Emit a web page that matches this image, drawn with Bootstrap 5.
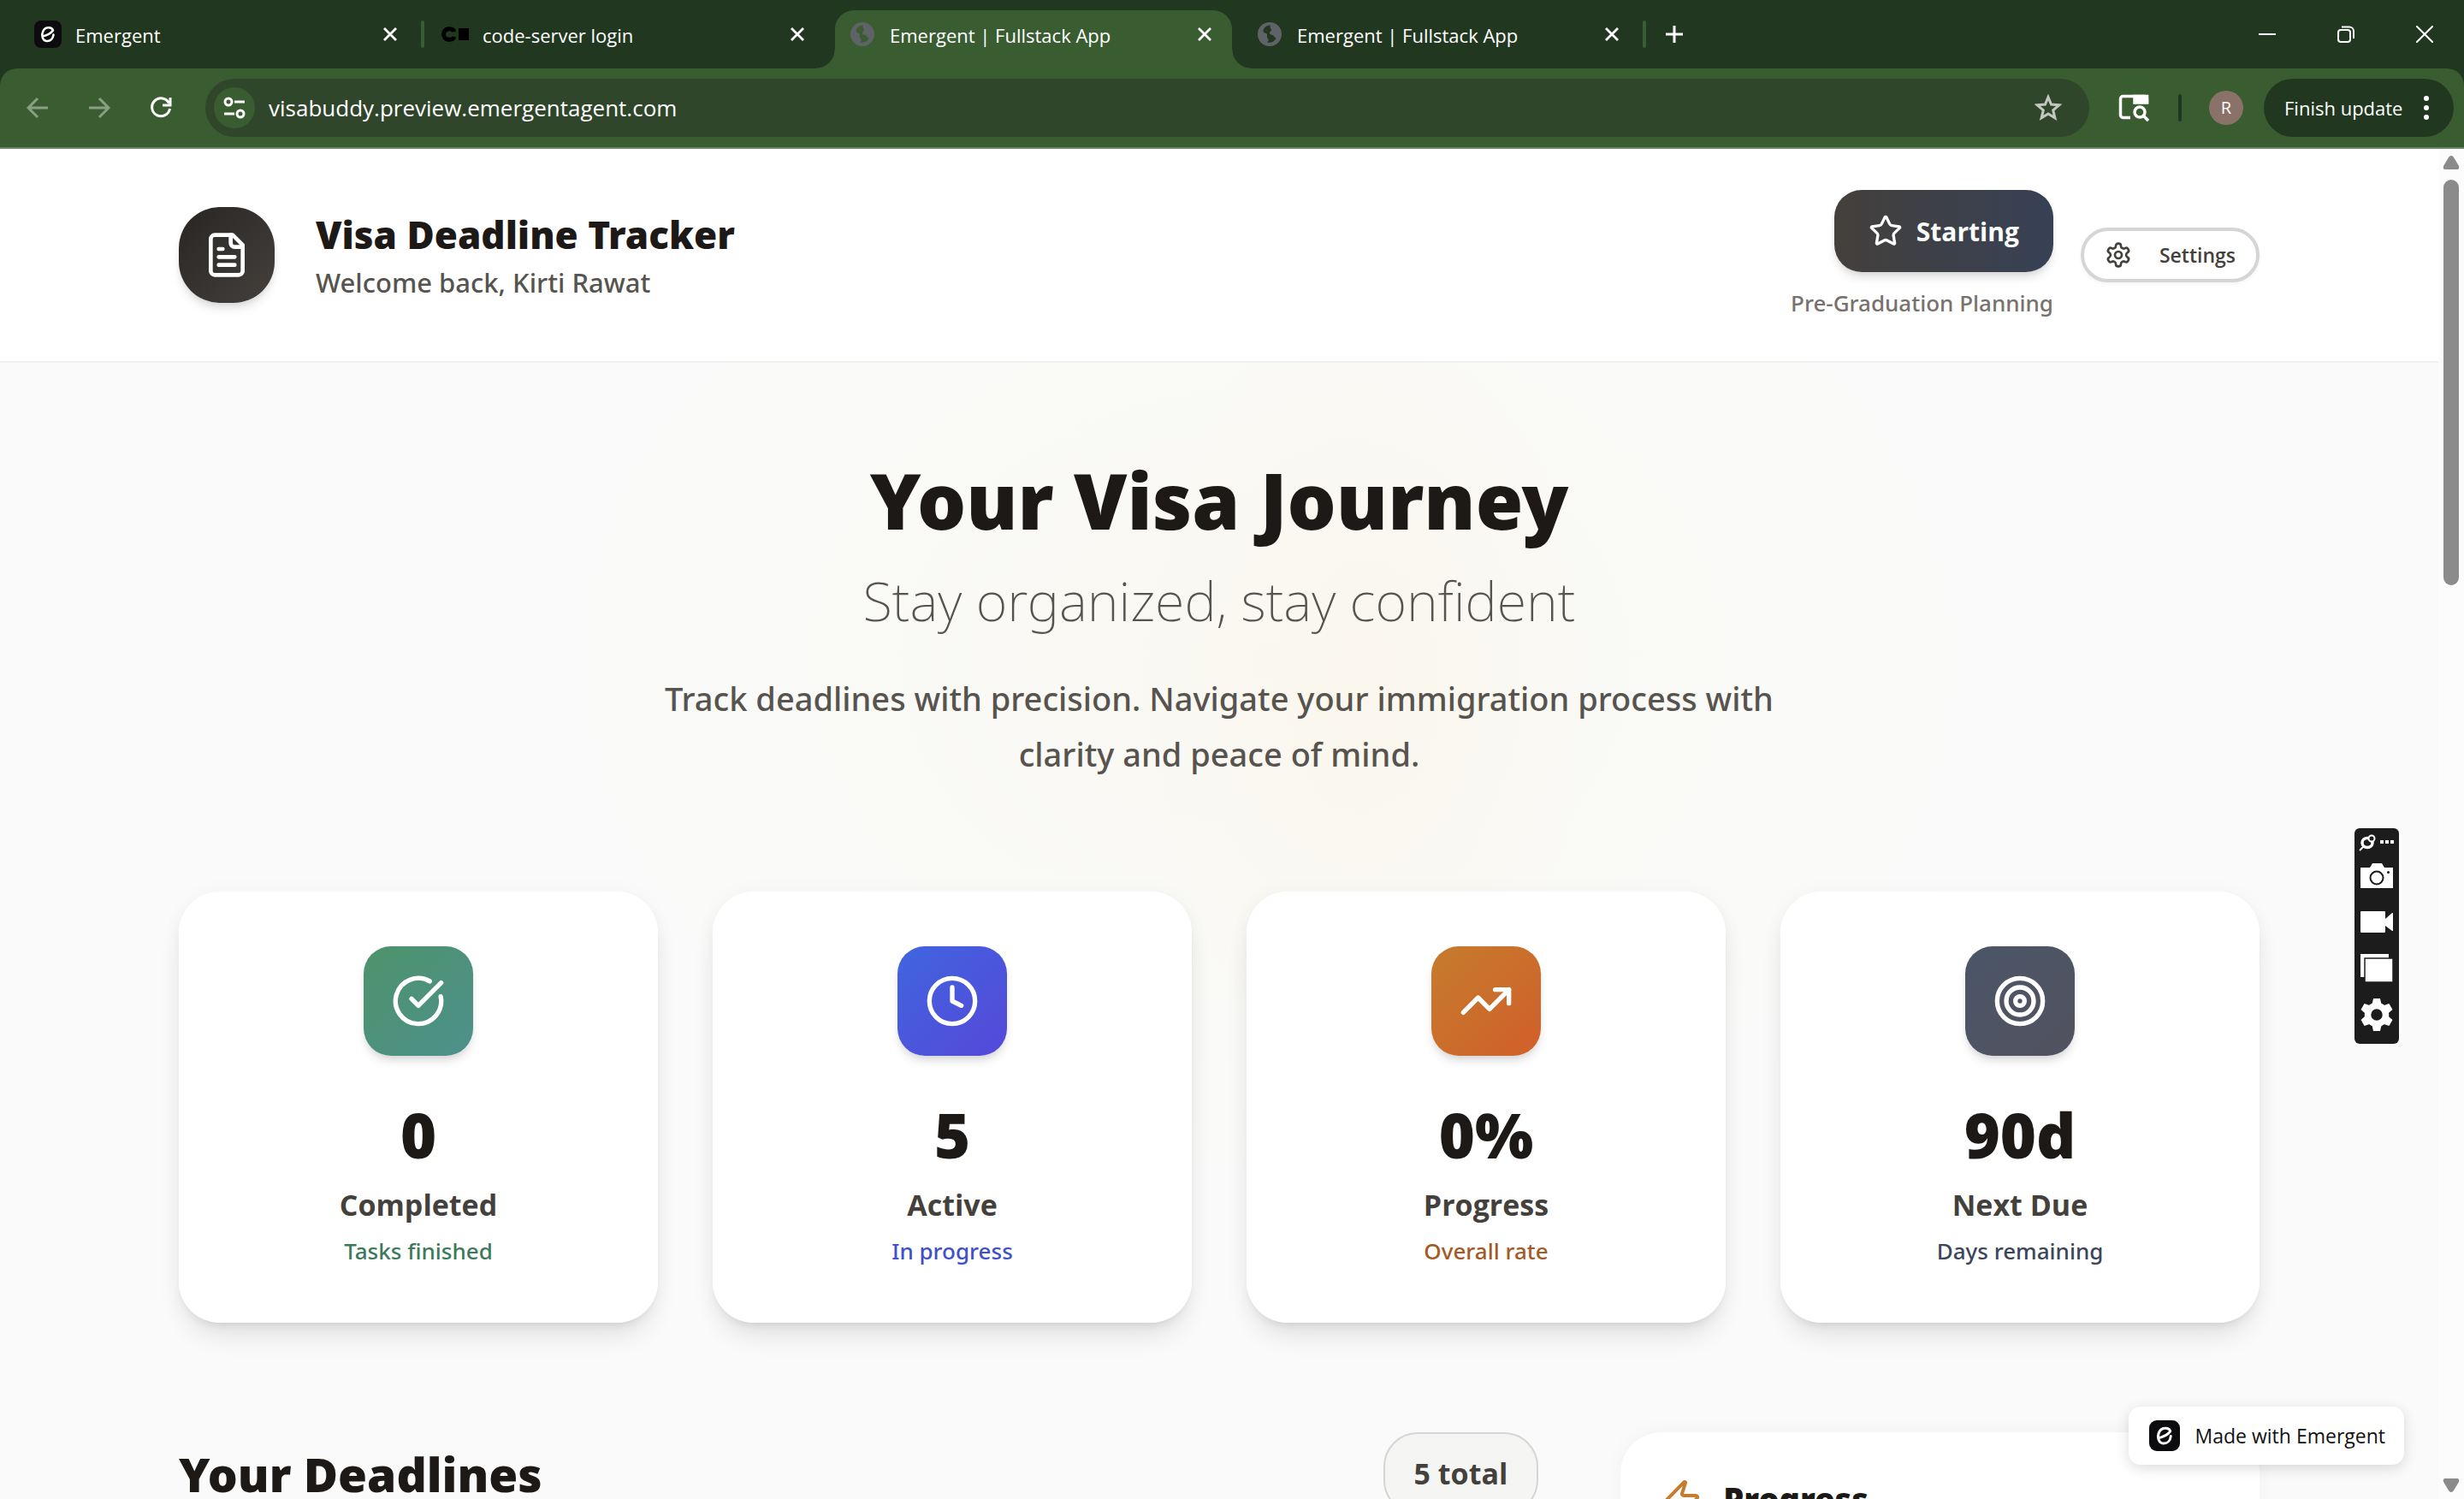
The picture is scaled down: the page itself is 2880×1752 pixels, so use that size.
<!DOCTYPE html>
<html lang="en">
<head>
<meta charset="utf-8">
<meta name="viewport" content="width=device-width, initial-scale=1">
<title>Emergent | Fullstack App</title>
<link href="https://cdn.jsdelivr.net/npm/bootstrap@5.3.0/dist/css/bootstrap.min.css" rel="stylesheet">
<style>
:root{--strip:#22371f;--bar:#3a5c31;--field:#30462b;--ink:#1c1917}
body{font-family:"Open Sans","Noto Sans",sans-serif;color:var(--ink);background:#fafafa}
button{font-family:inherit}
svg{display:block;flex:none}
.stroke-icon{fill:none;stroke:currentColor;stroke-width:2;stroke-linecap:round;stroke-linejoin:round}
.plain-btn{background:none;border:0;padding:0;color:inherit;display:flex;align-items:center;justify-content:center}
.heavy{font-family:"Noto Sans",sans-serif;font-weight:900}
.medium{font-family:"Noto Sans",sans-serif;font-weight:500}

/* browser frame */
.tab-strip{background:var(--strip);height:80px;padding:12px 0 0 24px;color:#fff;font-size:22px}
.browser-tab{width:464px;height:68px;padding:0 16px 12px;position:relative}
.browser-tab svg{width:32px;height:32px}
.browser-tab span{padding-top:2px}
.browser-tab .tab-close{width:32px}
.browser-tab.is-active{background:var(--bar);border-radius:22px 22px 0 0}
.browser-tab.is-active::before,.browser-tab.is-active::after{content:"";position:absolute;bottom:0;width:22px;height:22px}
.browser-tab.is-active::before{right:100%;background:radial-gradient(circle at 0 0,transparent 21px,var(--bar) 22px)}
.browser-tab.is-active::after{left:100%;background:radial-gradient(circle at 100% 0,transparent 21px,var(--bar) 22px)}
.tab-gap{width:12px;height:56px}
.tab-gap span{width:4px;height:32px;border-radius:2px;background:var(--bar)}
.new-tab{width:58px;height:56px}
.win-controls{height:56px}
.win-controls button{width:92px}
.toolbar-wrap{background:var(--strip)}
.tool-row{background:var(--bar);height:94px;border-bottom:2px solid #6b876a;border-radius:20px 20px 0 0;padding:12px 12px 12px 8px;color:#fff}
.nav-btn{width:72px;height:68px}
.nav-btn:disabled{color:#8aa083;opacity:1}
.address{background:var(--field);height:68px;border-radius:34px;padding:0 32px 0 10px;margin:0 34px 0 16px}
.site-info{width:48px;height:48px;border-radius:50%;background:var(--bar)}
.address input{background:none;border:0;outline:0;color:#fff;font-size:26px;padding:0;margin-left:16px;min-width:0}
.tool-sep{width:4px;height:32px;border-radius:2px;background:var(--strip);margin:0 32px 0 34px}
.avatar{width:40px;height:40px;border-radius:50%;background:#8a7268;font-size:20px}
.update-btn{background:var(--strip);border:0;border-radius:34px;height:68px;width:222px;color:#fff;font-size:22px;padding:0 28px 0 24px;margin-left:24px}

/* page */
.viewport-row{min-height:0}
.page-view{overflow:hidden;position:relative;background:
 radial-gradient(ellipse 260px 460px at 56% 40%,rgba(252,243,226,.35),transparent),
 radial-gradient(ellipse 860px 640px at 52% 38%,rgba(249,248,240,.8),transparent),#fafafa}
.scroll-rail{width:30px;background:#fcfcfc;padding:8px 0}
.scroll-rail .thumb{width:18px;height:474px;border-radius:9px;background:#8b8b8b;margin:12px 0 auto}
.wrap{width:100%;max-width:2432px;margin:0 auto}
.app-header{background:#fff;border-bottom:2px solid #f0f0ef;padding:48px 0}
.app-logo{width:112px;height:112px;border-radius:48px;background:linear-gradient(135deg,#292524,#44403c);color:#fff;box-shadow:0 8px 12px -2px rgba(0,0,0,.12),0 4px 8px -4px rgba(0,0,0,.1)}
.app-title{font-size:44px;line-height:64px;margin:0}
.app-sub{font-size:31px;line-height:48px;color:#57534e;margin:0}
.stage-btn{height:96px;border:0;border-radius:32px;padding:0 40px;gap:16px;color:#fff;font-size:30px;font-weight:700;background:linear-gradient(90deg,#44403c,#374155);box-shadow:0 8px 12px -2px rgba(0,0,0,.12),0 4px 8px -4px rgba(0,0,0,.1)}
.stage-note{font-size:26px;line-height:40px;color:#78716c;margin:16px 0 0}
.settings-btn{height:64px;border:4px solid #d6d5d4;border-radius:32px;background:#fff;padding:0 24px;gap:32px;font-size:23px;font-weight:600;color:#44403c;box-shadow:0 2px 4px rgba(0,0,0,.05)}
.hero{padding:100px 0 128px}
.hero h1{font-size:90px;line-height:120px;margin:0}
.hero-sub{font-family:"Noto Sans",sans-serif;font-weight:200;font-size:63px;line-height:116px;color:#57534e;margin:0}
.hero-text{font-size:38px;line-height:65px;color:#57534e;max-width:1344px;margin:24px auto 0}
.stat-grid{display:grid;grid-template-columns:repeat(4,1fr);gap:64px}
.stat-card{background:rgba(255,255,255,.94);border:0;border-radius:48px;padding:64px 32px 62px;box-shadow:0 20px 30px -6px rgba(0,0,0,.1),0 8px 12px -8px rgba(0,0,0,.12),0 0 24px rgba(0,0,0,.03)}
.stat-tile{width:128px;height:128px;border-radius:32px;color:#fff;margin:0 auto 48px;box-shadow:0 8px 12px -2px rgba(0,0,0,.12),0 4px 8px -4px rgba(0,0,0,.1)}
.tile-green{background:linear-gradient(135deg,#4d936b,#4d908b)}
.tile-blue{background:linear-gradient(135deg,#4065df,#5548d9)}
.tile-amber{background:linear-gradient(135deg,#c57c2d,#d15f2a)}
.tile-slate{background:linear-gradient(135deg,#4b5668,#52525f)}
.stat-num{font-size:72px;line-height:88px}
.stat-name{font-size:34px;line-height:64px;font-weight:700;color:#44403c;margin-top:6px}
.stat-note{font-size:26px;line-height:44px}
.note-green{color:#3d7a5a}.note-blue{color:#4050c8}.note-amber{color:#a45a26}.note-slate{color:#3c465a}
.lower-grid{display:grid;grid-template-columns:repeat(3,1fr);gap:96px;margin-top:128px}
.lower-main{grid-column:span 2}
.lower-main h2{font-size:55px;line-height:98px;margin:0}
.total-pill{height:96px;border:2px solid #d6d5d4;border-radius:40px;background:#f5f5f4;padding:0 34px;font-size:34px;font-weight:700;color:#44403c}
.progress-panel{background:#fff;border:0;border-radius:48px;padding:48px;min-height:320px;box-shadow:0 0 24px rgba(0,0,0,.04)}
.progress-panel h3{font-size:38px;line-height:60px;margin:0}

/* floating pieces */
.made-badge{position:absolute;right:40px;bottom:40px;height:68px;border-radius:14px;background:#fff;color:#111;font-size:23px;padding:0 22px 0 24px;gap:18px;text-decoration:none;box-shadow:0 4px 16px rgba(0,0,0,.14)}
.capture-box{position:absolute;right:46px;top:794px;width:52px;height:252px;border-radius:6px;background:#1c1c1c;color:#fff}
</style>
<script src="https://cdn.jsdelivr.net/npm/bootstrap@5.3.0/dist/js/bootstrap.bundle.min.js" defer></script>
</head>
<body class="d-flex flex-column vh-100 overflow-hidden">

<svg width="0" height="0" class="position-absolute" aria-hidden="true">
  <defs>
    <symbol id="em" viewBox="0 0 32 32"><rect width="32" height="32" rx="8" fill="#0c0c0e"/><path d="M9.500 18.500C14 17.500 19.500 15 22 11.500C21 7.500 13.500 6.500 10.500 12C8 17 9.500 23.500 14.500 24C19 24.300 22 21 22.500 16.500" fill="none" stroke="#fff" stroke-width="2.600" stroke-linecap="round" stroke-linejoin="round"/></symbol>
    <symbol id="globe" viewBox="0 0 32 32"><circle cx="16" cy="16" r="14" fill="#5f6368"/><path d="M17 5.500C12 5.500 9 8.500 8.500 12C9 15 12.500 14.500 13 16C13.500 18 12 19.500 14 21C15.500 22 14.500 24 13 25.500C18 26.500 22 24.500 23.500 20.500C22.500 19 21 19.500 20.500 17.500C19 16.500 16.500 17 16 15C15.500 13 17.500 13 18 11.500C18.500 9.500 15.500 9 17 5.500Z" fill="currentColor"/></symbol>
    <symbol id="tab-x" viewBox="0 0 32 32"><path d="M9 9l14 14M23 9L9 23" stroke="#fff" stroke-width="2.800" fill="none"/></symbol>
  </defs>
</svg>

<nav aria-label="Tabs" class="tab-strip d-flex align-items-start">
  <div class="browser-tab d-flex align-items-center">
    <svg><use href="#em"/></svg><span class="ms-3 flex-grow-1">Emergent</span>
    <button class="plain-btn tab-close" aria-label="Close tab"><svg><use href="#tab-x"/></svg></button>
  </div>
  <div class="tab-gap d-flex align-items-center justify-content-center"><span></span></div>
  <div class="browser-tab d-flex align-items-center">
    <svg viewBox="0 0 32 32"><path d="M15 13C13.500 8 2.500 8.500 2.500 16S13.500 24 15 19" fill="none" stroke="#000" stroke-width="5"/><path d="M20 9h12v14H20z" fill="#000"/></svg><span class="ms-3 flex-grow-1">code-server login</span>
    <button class="plain-btn tab-close" aria-label="Close tab"><svg><use href="#tab-x"/></svg></button>
  </div>
  <div class="tab-gap"></div>
  <div class="browser-tab is-active d-flex align-items-center">
    <svg color="#3a5c31"><use href="#globe"/></svg><span class="ms-3 flex-grow-1">Emergent | Fullstack App</span>
    <button class="plain-btn tab-close" aria-label="Close tab"><svg><use href="#tab-x"/></svg></button>
  </div>
  <div class="tab-gap"></div>
  <div class="browser-tab d-flex align-items-center">
    <svg color="#22371f"><use href="#globe"/></svg><span class="ms-3 flex-grow-1">Emergent | Fullstack App</span>
    <button class="plain-btn tab-close" aria-label="Close tab"><svg><use href="#tab-x"/></svg></button>
  </div>
  <div class="tab-gap d-flex align-items-center justify-content-center"><span></span></div>
  <button class="plain-btn new-tab" aria-label="New tab"><svg width="24" height="24"><path d="M12 2v20M2 12h20" stroke="#fff" stroke-width="3"/></svg></button>
  <div class="win-controls d-flex ms-auto">
    <button class="plain-btn" aria-label="Minimise"><svg width="20" height="20"><path d="M0 10h20" stroke="#fff" stroke-width="2"/></svg></button>
    <button class="plain-btn" aria-label="Restore"><svg width="22" height="22" fill="none" stroke="#fff" stroke-width="2"><rect x="2" y="6" width="14" height="14" rx="3"/><path d="M6 2.500h9a5 5 0 0 1 5 5V16"/></svg></button>
    <button class="plain-btn" aria-label="Close window"><svg width="20" height="20"><path d="M0 0l20 20M20 0L0 20" stroke="#fff" stroke-width="2"/></svg></button>
  </div>
</nav>

<div class="toolbar-wrap">
  <div class="tool-row d-flex align-items-center">
    <button class="plain-btn nav-btn" disabled aria-label="Back"><svg width="26" height="26" fill="none" stroke="currentColor" stroke-width="3"><path d="M25 13H3M13 2L2 13l11 11"/></svg></button>
    <button class="plain-btn nav-btn" disabled aria-label="Forward"><svg width="26" height="26" fill="none" stroke="currentColor" stroke-width="3"><path d="M1 13h22M13 2l11 11-11 11"/></svg></button>
    <button class="plain-btn nav-btn" aria-label="Reload"><svg width="26" height="26" fill="none" stroke="#fff" stroke-width="3"><path d="M22.500 7.500A10.500 10.500 0 1 0 23.500 14"/><path d="M24 1v9h-9" /></svg></button>
    <div class="address d-flex align-items-center flex-grow-1">
      <button class="plain-btn site-info" aria-label="Site information"><svg width="28" height="28" fill="none" stroke="#fff" stroke-width="3"><circle cx="7" cy="7" r="4"/><path d="M14 7h12M2 21h12"/><circle cx="21" cy="21" r="4"/></svg></button>
      <input class="flex-grow-1" type="text" aria-label="Address" value="visabuddy.preview.emergentagent.com">
      <button class="plain-btn" aria-label="Bookmark"><svg width="32" height="32" viewBox="0 0 32 32" fill="none" stroke="#c4c7c0" stroke-width="3"><path d="M16 3.500l3.500 8.600 9.200.7-7 6 2.200 9L16 23l-7.900 4.800 2.200-9-7-6 9.200-.7z"/></svg></button>
    </div>
    <button class="plain-btn" aria-label="Side search"><svg width="36" height="34" fill="none" stroke="#fff" stroke-width="3.500"><path d="M14 28.500H5.500a3 3 0 0 1-3-3V6.500a3 3 0 0 1 3-3h25a3 3 0 0 1 3 3V12"/><path d="M19 3.500h14.500V11H19z" fill="#fff"/><circle cx="25" cy="22" r="6"/><path d="M29 26l6 6"/></svg></button>
    <span class="tool-sep"></span>
    <button class="plain-btn avatar" aria-label="Profile">R</button>
    <button class="update-btn d-flex align-items-center justify-content-between">Finish update <svg width="8" height="30" fill="#fff"><circle cx="4" cy="4" r="3"/><circle cx="4" cy="15" r="3"/><circle cx="4" cy="26" r="3"/></svg></button>
  </div>
</div>

<div class="viewport-row d-flex flex-grow-1">
  <div class="page-view flex-grow-1">
    <header class="app-header">
      <div class="wrap d-flex align-items-center justify-content-between">
        <div class="d-flex align-items-center gap-5">
          <div class="app-logo d-flex align-items-center justify-content-center">
            <svg class="stroke-icon" width="56" height="56" viewBox="0 0 24 24"><path d="M15 2H6a2 2 0 0 0-2 2v16a2 2 0 0 0 2 2h12a2 2 0 0 0 2-2V7z"/><path d="M14 2v4a2 2 0 0 0 2 2h4M10 9H8M16 13H8M16 17H8"/></svg>
          </div>
          <div>
            <p class="app-title heavy">Visa Deadline Tracker</p>
            <p class="app-sub medium">Welcome back, Kirti Rawat</p>
          </div>
        </div>
        <div class="d-flex align-items-center">
          <div class="d-flex flex-column align-items-end me-4 pe-2">
            <button class="stage-btn d-flex align-items-center"><svg class="stroke-icon" width="40" height="40" viewBox="0 0 24 24"><path d="M11.525 2.295a.53.53 0 0 1 .95 0l2.310 4.679a2.123 2.123 0 0 0 1.595 1.160l5.166.756a.53.53 0 0 1 .294.904l-3.736 3.638a2.123 2.123 0 0 0-.611 1.878l.882 5.140a.53.53 0 0 1-.771.560l-4.618-2.428a2.122 2.122 0 0 0-1.973 0L6.396 21.010a.53.53 0 0 1-.770-.560l.881-5.139a2.122 2.122 0 0 0-.611-1.879L2.160 9.795a.53.53 0 0 1 .294-.906l5.165-.755a2.122 2.122 0 0 0 1.597-1.160z"/></svg>Starting</button>
            <p class="stage-note medium">Pre-Graduation Planning</p>
          </div>
          <button class="settings-btn d-flex align-items-center"><svg class="stroke-icon" width="32" height="32" viewBox="0 0 24 24"><path d="M12.220 2h-.440a2 2 0 0 0-2 2v.180a2 2 0 0 1-1 1.730l-.430.250a2 2 0 0 1-2 0l-.150-.080a2 2 0 0 0-2.730.730l-.220.380a2 2 0 0 0 .730 2.730l.150.100a2 2 0 0 1 1 1.720v.510a2 2 0 0 1-1 1.740l-.150.090a2 2 0 0 0-.730 2.730l.220.380a2 2 0 0 0 2.730.730l.150-.080a2 2 0 0 1 2 0l.430.250a2 2 0 0 1 1 1.730V20a2 2 0 0 0 2 2h.440a2 2 0 0 0 2-2v-.180a2 2 0 0 1 1-1.730l.430-.250a2 2 0 0 1 2 0l.150.080a2 2 0 0 0 2.730-.730l.220-.390a2 2 0 0 0-.730-2.730l-.150-.080a2 2 0 0 1-1-1.740v-.500a2 2 0 0 1 1-1.740l.150-.090a2 2 0 0 0 .730-2.730l-.220-.380a2 2 0 0 0-2.730-.730l-.150.080a2 2 0 0 1-2 0l-.430-.250a2 2 0 0 1-1-1.730V4a2 2 0 0 0-2-2z"/><circle cx="12" cy="12" r="3"/></svg>Settings</button>
        </div>
      </div>
    </header>

    <main class="wrap">
      <section class="hero text-center">
        <h1 class="heavy">Your Visa Journey</h1>
        <p class="hero-sub">Stay organized, stay confident</p>
        <p class="hero-text medium">Track deadlines with precision. Navigate your immigration process with clarity and peace of mind.</p>
      </section>

      <section class="stat-grid text-center">
        <div class="card stat-card">
          <div class="stat-tile tile-green d-flex align-items-center justify-content-center"><svg class="stroke-icon" width="64" height="64" viewBox="0 0 24 24"><path d="M21.801 10A10 10 0 1 1 17 3.335"/><path d="m9 11 3 3L22 4"/></svg></div>
          <div class="stat-num heavy">0</div>
          <div class="stat-name">Completed</div>
          <div class="stat-note medium note-green">Tasks finished</div>
        </div>
        <div class="card stat-card">
          <div class="stat-tile tile-blue d-flex align-items-center justify-content-center"><svg class="stroke-icon" width="64" height="64" viewBox="0 0 24 24"><circle cx="12" cy="12" r="10"/><path d="M12 6v6l4 2"/></svg></div>
          <div class="stat-num heavy">5</div>
          <div class="stat-name">Active</div>
          <div class="stat-note medium note-blue">In progress</div>
        </div>
        <div class="card stat-card">
          <div class="stat-tile tile-amber d-flex align-items-center justify-content-center"><svg class="stroke-icon" width="64" height="64" viewBox="0 0 24 24"><path d="M22 7l-8.500 8.500-5-5L2 17"/><path d="M16 7h6v6"/></svg></div>
          <div class="stat-num heavy">0%</div>
          <div class="stat-name">Progress</div>
          <div class="stat-note medium note-amber">Overall rate</div>
        </div>
        <div class="card stat-card">
          <div class="stat-tile tile-slate d-flex align-items-center justify-content-center"><svg class="stroke-icon" width="64" height="64" viewBox="0 0 24 24"><circle cx="12" cy="12" r="10"/><circle cx="12" cy="12" r="6"/><circle cx="12" cy="12" r="2"/></svg></div>
          <div class="stat-num heavy">90d</div>
          <div class="stat-name">Next Due</div>
          <div class="stat-note medium note-slate">Days remaining</div>
        </div>
      </section>

      <section class="lower-grid">
        <div class="lower-main d-flex align-items-start justify-content-between">
          <h2 class="heavy">Your Deadlines</h2>
          <span class="total-pill d-flex align-items-center">5 total</span>
        </div>
        <div class="card progress-panel">
          <div class="d-flex align-items-center gap-4">
            <svg class="stroke-icon" color="#c57c2d" width="48" height="48" viewBox="0 0 24 24"><path d="M4 14a1 1 0 0 1-.780-1.630l9.900-10.200a.5.5 0 0 1 .860.460l-1.920 6.020A1 1 0 0 0 13 10h7a1 1 0 0 1 .780 1.630l-9.900 10.200a.5.5 0 0 1-.860-.460l1.920-6.020A1 1 0 0 0 11 14z"/></svg>
            <h3 class="heavy">Progress</h3>
          </div>
        </div>
      </section>
    </main>

    <a href="#" class="made-badge d-flex align-items-center"><svg width="36" height="36"><use href="#em"/></svg>Made with Emergent</a>

    <svg class="capture-box" viewBox="0 0 52 252" fill="#fff" role="img" aria-label="Screen capture tools">
      <path d="M6 26l5-5" stroke="#fff" stroke-width="2"/><ellipse cx="15" cy="17" rx="6" ry="5.500" fill="none" stroke="#fff" stroke-width="3.500"/><circle cx="20" cy="12" r="3.500" fill="#1c1c1c" stroke="#fff" stroke-width="2"/>
      <path d="M30 14h4v4h-4zM36 14h4v4h-4zM42 14h4v4h-4z"/>
      <path d="M7 46h11l3-5h11l3 5h10v24H7z"/><circle cx="26" cy="58" r="7.500" fill="none" stroke="#1c1c1c" stroke-width="2"/><circle cx="39.500" cy="51.500" r="1.500" fill="#1c1c1c"/>
      <path d="M8 97h27a1 1 0 0 1 1 1v8l8-7h1v21h-1l-8-6v7a1 1 0 0 1-1 1H8a1 1 0 0 1-1-1V98a1 1 0 0 1 1-1z"/>
      <path d="M7 147h33v27H7z"/><path d="M12 152h33v28H12z" stroke="#1c1c1c" stroke-width="1.500"/>
      <g transform="translate(26 218)"><circle r="10.500" fill="none" stroke="#fff" stroke-width="7.500"/><path id="tooth" d="M-5.500-12l1.500-7h8l1.500 7z"/><use href="#tooth" transform="rotate(60)"/><use href="#tooth" transform="rotate(120)"/><use href="#tooth" transform="rotate(180)"/><use href="#tooth" transform="rotate(240)"/><use href="#tooth" transform="rotate(300)"/></g>
    </svg>
  </div>

  <div class="scroll-rail d-flex flex-column align-items-center">
    <svg width="20" height="16" fill="#8b8b8b"><path d="M10 0q2 0 3 2l6 10q1 4-2 4H3q-3 0-2-4L7 2q1-2 3-2z"/></svg>
    <span class="thumb"></span>
    <svg width="20" height="16" fill="#8b8b8b"><path d="M10 16q-2 0-3-2L1 4q-1-4 2-4h14q3 0 2 4l-6 10q-1 2-3 2z"/></svg>
  </div>
</div>
</body>
</html>
